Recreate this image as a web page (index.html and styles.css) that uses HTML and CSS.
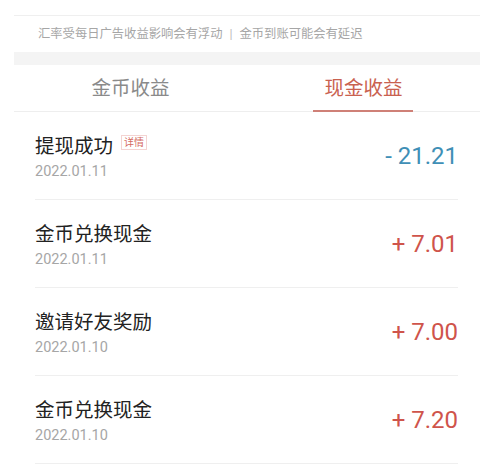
FILE: index.html
```html
<!DOCTYPE html>
<html>
<head>
    <title>现金收益</title>
    <link rel="stylesheet" href="styles.css">
</head>
<body>
    <div class="panel">
        <div class="notice">汇率受每日广告收益影响会有浮动<span class="sep">|</span>金币到账可能会有延迟</div>
        <div class="band"></div>
        <div class="tabs">
            <div class="tab">金币收益</div>
            <div class="tab active">现金收益</div>
        </div>
        <ul class="records">
            <li class="record">
                <div class="info">
                    <div class="title">提现成功 <span class="badge">详情</span></div>
                    <div class="date">2022.01.11</div>
                </div>
                <div class="amount minus">- 21.21</div>
            </li>
            <li class="record">
                <div class="info">
                    <div class="title">金币兑换现金</div>
                    <div class="date">2022.01.11</div>
                </div>
                <div class="amount">+ 7.01</div>
            </li>
            <li class="record">
                <div class="info">
                    <div class="title">邀请好友奖励</div>
                    <div class="date">2022.01.10</div>
                </div>
                <div class="amount">+ 7.00</div>
            </li>
            <li class="record">
                <div class="info">
                    <div class="title">金币兑换现金</div>
                    <div class="date">2022.01.10</div>
                </div>
                <div class="amount">+ 7.20</div>
            </li>
        </ul>
    </div>
</body>
</html>
```

FILE: styles.css
```css
body {
    margin: 0;
    background-color: #fff;
    font-family: Roboto, "Noto Sans CJK SC", sans-serif;
    color: #222;
}
.panel {
    margin: 15px 20px 0 14px;
    border-top: 1px solid #efefef;
}
.notice {
    height: 36px;
    line-height: 36px;
    padding-left: 24px;
    font-size: 12.3px;
    color: #a6a6a6;
}
.notice .sep {
    margin: 0 7px;
    color: #bbb;
}
.band {
    height: 13px;
    background-color: #f4f4f4;
}
.tabs {
    display: flex;
    height: 42px;
    padding-bottom: 4px;
    border-bottom: 1px solid #eee;
}
.tab {
    flex: 1;
    display: flex;
    justify-content: center;
    align-items: center;
    font-size: 19.5px;
    color: #8a8a8a;
    position: relative;
}
.tab.active {
    color: #c9614f;
}
.tab.active::after {
    content: "";
    position: absolute;
    left: 66px;
    width: 100px;
    bottom: -5px;
    height: 2px;
    background-color: #cf8077;
}
.records {
    list-style: none;
    margin: 0;
    padding: 0 22px 0 21px;
}
.record {
    display: flex;
    justify-content: space-between;
    align-items: flex-start;
    height: 87px;
    border-bottom: 1px solid #efefef;
}
.info {
    padding-top: 20px;
}
.title {
    display: flex;
    align-items: center;
    height: 24px;
    font-size: 19.5px;
    color: #222;
}
.badge {
    margin-left: 8px;
    padding: 0 2px;
    height: 13px;
    line-height: 13px;
    font-size: 10px;
    color: #d46a62;
    border: 1px solid #f4d4d2;
    margin-top: -3px;
}
.date {
    margin-top: 6px;
    height: 20px;
    line-height: 20px;
    font-size: 14.5px;
    color: #a6a6a6;
}
.amount {
    align-self: center;
    font-size: 24px;
    color: #cf544b;
}
.amount.minus {
    color: #3f8fb6;
}
```
